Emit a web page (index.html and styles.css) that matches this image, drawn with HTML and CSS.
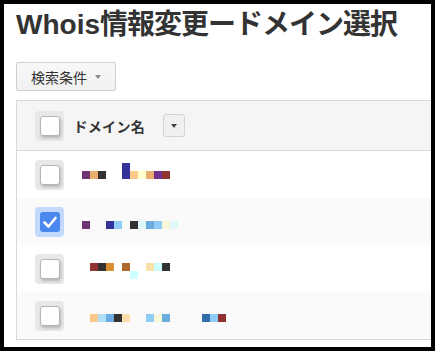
FILE: index.html
```html
<!DOCTYPE html>
<html lang="ja">
<head>
    <meta charset="UTF-8">
    <title>Whois情報変更ードメイン選択</title>
    <link rel="stylesheet" href="styles.css">
</head>
<body>
    <div class="page">
        <h1 class="title">Whois<span class="jp">情報変更ードメイン選択</span></h1>

        <button class="filter-btn">検索条件 <span class="caret"></span></button>

        <table class="domains">
            <thead>
                <tr>
                    <th class="check-col"><span class="check"><span class="box"></span></span></th>
                    <th class="name-col">
                        <span class="head-label">ドメイン名</span>
                        <span class="sort-btn"><span class="caret dark"></span></span>
                    </th>
                </tr>
            </thead>
            <tbody>
                <tr>
                    <td class="check-col"><span class="check"><span class="box"></span></span></td>
                    <td class="name-col">
                        <div class="name">
                            <span class="px"></span><span class="px c-plum"></span><span class="px c-tan"></span><span class="px c-ink"></span><span class="px"></span><span class="px"></span><span class="px tall c-navy"></span><span class="px c-peach"></span><span class="px c-cream"></span><span class="px c-tan"></span><span class="px c-violet"></span><span class="px c-brick"></span>
                        </div>
                    </td>
                </tr>
                <tr class="alt">
                    <td class="check-col"><span class="check on"><span class="box"><svg viewBox="0 0 20 20" width="20" height="20"><polyline points="4.5,10.5 8.5,14.5 15.5,6" fill="none" stroke="#fff" stroke-width="2.6" stroke-linecap="round" stroke-linejoin="round"/></svg></span></span></td>
                    <td class="name-col">
                        <div class="name down">
                            <span class="px"></span><span class="px c-plum"></span><span class="px"></span><span class="px"></span><span class="px c-navy"></span><span class="px c-sky"></span><span class="px"></span><span class="px c-ink"></span><span class="px c-mint"></span><span class="px c-blue"></span><span class="px c-sky"></span><span class="px c-ivory"></span><span class="px c-mint"></span>
                        </div>
                    </td>
                </tr>
                <tr>
                    <td class="check-col"><span class="check"><span class="box"></span></span></td>
                    <td class="name-col">
                        <div class="name up">
                            <span class="px"></span><span class="px"></span><span class="px c-brick"></span><span class="px c-ink"></span><span class="px c-amber"></span><span class="px"></span><span class="px c-rust"></span><span class="px drop c-aqua"></span><span class="px"></span><span class="px c-sand"></span><span class="px c-aqua"></span><span class="px c-ink"></span>
                        </div>
                    </td>
                </tr>
                <tr class="alt">
                    <td class="check-col"><span class="check"><span class="box"></span></span></td>
                    <td class="name-col">
                        <div class="name down-sm">
                            <span class="px"></span><span class="px"></span><span class="px c-peach"></span><span class="px c-ice"></span><span class="px c-blue"></span><span class="px c-ink"></span><span class="px c-sand"></span><span class="px"></span><span class="px"></span><span class="px c-sky"></span><span class="px c-ivory"></span><span class="px c-blue"></span><span class="px"></span><span class="px"></span><span class="px"></span><span class="px"></span><span class="px c-steel"></span><span class="px c-sky"></span><span class="px c-brick"></span>
                        </div>
                    </td>
                </tr>
            </tbody>
        </table>
    </div>
</body>
</html>
```

FILE: styles.css
```css
html {
    margin: 0;
    background-color: #000;
}
body {
    margin: 4px;
    width: 427px;
    height: 343px;
    background-color: #fff;
    overflow: hidden;
    font-family: "Liberation Sans", "Noto Sans CJK JP", sans-serif;
    color: #333;
}
.page {
    padding-left: 12px;
    overflow: hidden;
}
.title {
    margin: 0;
    padding-top: 4px;
    font-size: 28px;
    line-height: 34px;
    font-weight: bold;
    white-space: nowrap;
}
.title .jp {
    letter-spacing: -1px;
}
.filter-btn {
    display: flex;
    align-items: center;
    gap: 8px;
    margin-top: 20px;
    height: 29px;
    padding: 0 14px 0 14px;
    background: linear-gradient(#f8f8f8, #f1f1f1);
    border: 1px solid #d0d0d0;
    border-radius: 2px;
    font-family: "Liberation Sans", "Noto Sans CJK JP", sans-serif;
    font-size: 14px;
    color: #333;
}
.caret {
    display: inline-block;
    width: 0;
    height: 0;
    border-left: 3px solid transparent;
    border-right: 3px solid transparent;
    border-top: 4px solid #888;
}
.caret.dark {
    border-top-color: #444;
}
.domains {
    margin-top: 9px;
    width: 460px;
    border-collapse: collapse;
    border: 1px solid #d9d9d9;
    border-right: none;
}
.domains th {
    height: 49px;
    padding: 0;
    background-color: #f5f5f5;
    border-bottom: 1px solid #d9d9d9;
    text-align: left;
}
.domains td {
    height: 47px;
    padding: 0;
}
.domains tr.alt td {
    background-color: #fafafa;
}
.check-col {
    width: 57px;
    padding-left: 18px !important;
    box-sizing: border-box;
}
.name-col {
    padding-left: 0;
    white-space: nowrap;
}
.check {
    display: flex;
    align-items: center;
    justify-content: center;
    width: 29px;
    height: 30px;
    background-color: #e8e8e8;
    border-radius: 4px;
}
.check .box {
    display: block;
    width: 18px;
    height: 18px;
    background-color: #fff;
    border: 1px solid #b5b5b5;
    border-radius: 3px;
    box-shadow: 1px 2px 3px rgba(0, 0, 0, 0.22);
}
.check.on {
    background-color: #c2d8fd;
}
.check.on .box {
    width: 20px;
    height: 20px;
    border: none;
    background-color: #4a88ef;
    box-shadow: none;
}
.check.on svg {
    display: block;
}
.head-label {
    font-size: 14px;
    font-weight: bold;
    letter-spacing: 0.3px;
    vertical-align: middle;
}
.sort-btn {
    display: inline-flex;
    align-items: center;
    justify-content: center;
    width: 20px;
    height: 21px;
    margin-left: 14px;
    vertical-align: middle;
    background-color: #f0f0f0;
    border: 1px solid #d3d3d3;
    border-radius: 3px;
}
.name {
    display: flex;
    height: 8px;
    align-items: flex-start;
}
.name.down { margin-top: 6px; }
.name.up { margin-top: -4px; }
.name.down-sm { margin-top: 4px; }
.px {
    flex: none;
    width: 8px;
    height: 8px;
}
.px.tall {
    height: 16px;
    margin-top: -8px;
}
.px.drop {
    margin-top: 8px;
}
.c-plum { background-color: #6e3370; }
.c-tan { background-color: #e8ae6e; }
.c-ink { background-color: #333333; }
.c-navy { background-color: #333399; }
.c-peach { background-color: #fcc98a; }
.c-cream { background-color: #ffffcc; }
.c-violet { background-color: #703090; }
.c-brick { background-color: #903333; }
.c-sky { background-color: #90ccf8; }
.c-mint { background-color: #e0f8f8; }
.c-blue { background-color: #6aabe0; }
.c-ivory { background-color: #f8f8d8; }
.c-amber { background-color: #d89030; }
.c-rust { background-color: #b06a30; }
.c-aqua { background-color: #ccffff; }
.c-sand { background-color: #f8e0a8; }
.c-ice { background-color: #b0e0f8; }
.c-steel { background-color: #336aaa; }
```
